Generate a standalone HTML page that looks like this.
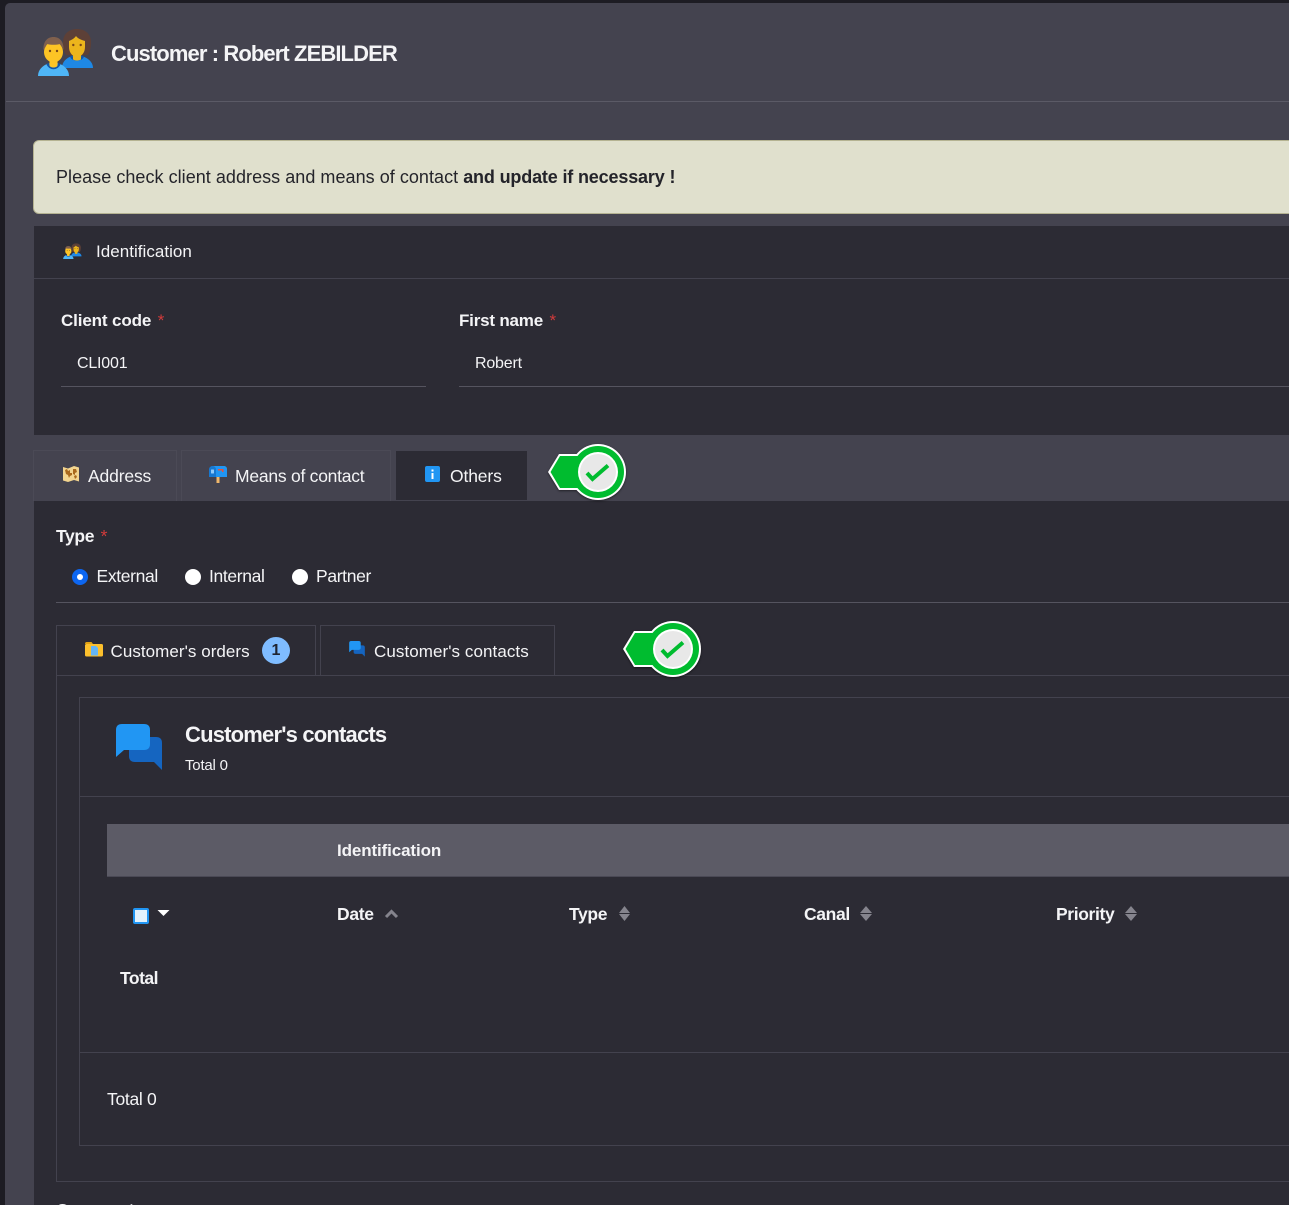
<!DOCTYPE html>
<html>
<head>
<meta charset="utf-8">
<style>
html,body{margin:0;padding:0;width:1289px;height:1205px;overflow:hidden;background:#1d1c23;font-family:"Liberation Sans",sans-serif;color:#f4f4f6}
#w{position:absolute;left:0;top:0;width:1289px;height:1205px;overflow:hidden;background:#1d1c23}
.a{position:absolute}
.t{position:absolute;white-space:nowrap;line-height:20px}
.b{font-weight:bold}
.line{position:absolute;background:#43424e;height:1px}
.tab{position:absolute;box-sizing:border-box;border:1px solid #4a4955}
.req{color:#d23b3b;font-weight:normal}
svg{position:absolute;overflow:visible}
.radio{position:absolute;width:16px;height:16px;border-radius:50%;background:#fff}
</style>
</head>
<body>
<div id="w">
<svg width="0" height="0" style="position:absolute">
<defs>
<symbol id="people" viewBox="0 0 56 48">
<path d="M25 14C25 6 31 1 39 1s14 5 14 13c0 5-1 10-3 13H28c-2-3-3-8-3-13z" fill="#5d4037"/>
<path d="M24 40c0-6 4-10 10-12h10c6 2 11 6 11 12z" fill="#1e88e5"/>
<path d="M33 28c2 4.500 10 4.500 12 0" fill="none" stroke="#1256a8" stroke-width="2.500"/>
<path d="M35 24h8v7c0 1-2 1.500-4 1.500s-4-.5-4-1.500z" fill="#ecb51c"/>
<path d="M31 13c2-1 5-2 7-5 2 3 6 4 9 5v6c0 6-4 10-8 10s-8-4-8-10z" fill="#ecb51c"/>
<circle cx="35.300" cy="17" r="1.200" fill="#784719"/><circle cx="42.700" cy="17" r="1.200" fill="#784719"/>
<path d="M0 48c0-6 4-10 10-12.500h11c6 2.500 10 6.500 10 12.500z" fill="#4fb6f7"/>
<path d="M9.500 35.500c2 6 10 6 12 0" fill="none" stroke="#1256a8" stroke-width="2.500"/>
<path d="M11.500 28h8v9.500c0 1-2 2-4 2s-4-1-4-2z" fill="#fdc425"/>
<ellipse cx="15.500" cy="24" rx="9.500" ry="10.500" fill="#fdc425"/>
<path d="M5.500 22C5 14 9 9 15.500 9s10.500 5 10 13c-1-2-2-4-3.500-6-4 1-9 1-13 0-1 2-2 4-3.500 6z" fill="#80604d"/>
<circle cx="12" cy="23" r="1.200" fill="#784719"/><circle cx="19" cy="23" r="1.200" fill="#784719"/>
</symbol>
<symbol id="chat" viewBox="0 0 46 47">
<path d="M13 13h27q6 0 6 6v27l-8-8H19q-6 0-6-6z" fill="#1565c0"/>
<path d="M6 0h22q6 0 6 6v14q0 6-6 6H8l-8 7V6q0-6 6-6z" fill="#2196f3"/>
</symbol>
<symbol id="pin" viewBox="0 0 78 56">
<path d="M0 28L11 10h30v36H11z" fill="#fff"/>
<circle cx="50" cy="28" r="28" fill="#fff"/>
<path d="M2.500 28L12 12h30v32H12z" fill="#00bc2f"/>
<circle cx="50" cy="28" r="26" fill="#00bc2f"/>
<circle cx="50" cy="28" r="20" fill="#fff"/>
<circle cx="50" cy="28" r="18" fill="#e8e8e8"/>
<path d="M39 29l5.500 6L60 21.500" fill="none" stroke="#00bc2f" stroke-width="4"/>
</symbol>
</defs>
</svg>

<div class="a" style="left:5px;top:3px;width:1290px;height:1210px;background:#44434f;border-radius:5px 0 0 0"></div>
<div class="line" style="left:6px;top:101px;width:1283px;background:#5b5a66"></div>

<svg style="left:38px;top:28px" width="56" height="48"><use href="#people" width="56" height="48"/></svg>
<div class="t b" style="left:111px;top:41px;font-size:22px;line-height:26px;letter-spacing:-.9px">Customer : Robert ZEBILDER</div>

<div class="a" style="left:33px;top:140px;width:1270px;height:74px;box-sizing:border-box;background:#e0e0cd;border:1px solid #b5b392;border-radius:6px"></div>
<div class="t" style="left:56px;top:167px;font-size:18px;color:#24242a;letter-spacing:.04px">Please check client address and means of contact <b style="letter-spacing:-.16px">and update if necessary !</b></div>

<!-- Identification -->
<div class="a" style="left:34px;top:226px;width:1260px;height:209px;background:#2c2b34"></div>
<div class="line" style="left:34px;top:278px;width:1255px"></div>
<svg style="left:63px;top:243px" width="19" height="16"><use href="#people" width="19" height="16"/></svg>
<div class="t" style="left:96px;top:242px;font-size:17px;letter-spacing:.03px">Identification</div>

<div class="t b" style="left:61px;top:311px;font-size:17px;letter-spacing:-.13px">Client code <span class="req" style="margin-left:2px">*</span></div>
<div class="t" style="left:77px;top:354px;font-size:16px;letter-spacing:-.2px">CLI001</div>
<div class="line" style="left:61px;top:386px;width:365px;background:#55545f"></div>

<div class="t b" style="left:459px;top:311px;font-size:17px;letter-spacing:-.2px">First name <span class="req" style="margin-left:2px">*</span></div>
<div class="t" style="left:475px;top:354px;font-size:16px;letter-spacing:-.2px">Robert</div>
<div class="line" style="left:459px;top:386px;width:830px;background:#55545f"></div>

<!-- main tabs -->
<div class="tab" style="left:33px;top:450px;width:144px;height:51px;border-color:#4b4a56;border-bottom:0"></div>
<div class="tab" style="left:181px;top:450px;width:210px;height:51px;border-color:#4b4a56;border-bottom:0"></div>
<div class="tab" style="left:396px;top:451px;width:131px;height:49px;background:#2c2b34;border:0"></div>

<svg style="left:62px;top:465px" width="18" height="18" viewBox="0 0 18 18">
<path d="M1 2l5 1.500L12 1l5 1.500v14L12 15l-6 2-5-1.500z" fill="#f3d58f"/>
<path d="M3 5l2-1 1 2 2-1 0 3 2 0 0 2-2 1-1 2-1-3-2-1zM11 4l3 0 1 3-2 1 0 2-2-1zM12 11l2-1 1 2-2 2z" fill="#a9691d"/>
</svg>
<div class="t" style="left:88px;top:466px;font-size:17.500px;letter-spacing:-.15px">Address</div>

<svg style="left:209px;top:466px" width="18" height="17" viewBox="0 0 18 17">
<rect x="7.500" y="11" width="3" height="6" fill="#f0b76b"/>
<path d="M4 0h11c1.500 0 3 1 3 3v8H1V3c0-2 1.500-3 3-3z" fill="#2196f3"/>
<path d="M3.500 0C5.500 0 7 1.500 7 3.500V11H0V3.500C0 1.500 1.500 0 3.500 0z" fill="#1878d0"/>
<rect x="2" y="3.500" width="3" height="4" rx=".5" fill="#90caf9"/>
<path d="M9 3h5.500v3H13V4.500H9z" fill="#e5533d"/>
</svg>
<div class="t" style="left:235px;top:466px;font-size:17.500px;letter-spacing:-.24px">Means of contact</div>

<svg style="left:425px;top:466px" width="15" height="16" viewBox="0 0 15 16">
<rect width="15" height="16" rx="2" fill="#2196f3"/>
<rect x="6.500" y="7" width="2" height="6" fill="#fff"/><rect x="6.500" y="3.500" width="2" height="2" fill="#fff"/>
</svg>
<div class="t" style="left:450px;top:466px;font-size:17.500px;letter-spacing:-.14px">Others</div>

<!-- content panel -->
<div class="a" style="left:34px;top:501px;width:1260px;height:710px;background:#2c2b34"></div>

<!-- pin 1 -->
<svg style="left:548px;top:444px;filter:drop-shadow(0 1px 1px rgba(0,0,0,.5))" width="78" height="56"><use href="#pin" width="78" height="56"/></svg>

<!-- Type -->
<div class="t b" style="left:56px;top:526px;font-size:17.500px;letter-spacing:-.37px">Type <span class="req" style="margin-left:2px">*</span></div>
<div class="radio" style="left:72px;top:569px;background:#0d66f0"></div>
<div class="radio" style="left:77px;top:574px;width:6px;height:6px;background:#fff"></div>
<div class="t" style="left:96.500px;top:566px;font-size:17.500px;letter-spacing:-.35px">External</div>
<div class="radio" style="left:185px;top:569px"></div>
<div class="t" style="left:209px;top:566px;font-size:17.500px;letter-spacing:-.35px">Internal</div>
<div class="radio" style="left:292px;top:569px"></div>
<div class="t" style="left:316px;top:566px;font-size:17.500px;letter-spacing:-.35px">Partner</div>
<div class="line" style="left:56px;top:602px;width:1233px;background:#55545f"></div>

<!-- sub tabs -->
<div class="tab" style="left:56px;top:625px;width:260px;height:51px;border-color:#43424e"></div>
<div class="tab" style="left:320px;top:625px;width:235px;height:51px;border-color:#43424e"></div>
<div class="a" style="left:56px;top:675px;width:1240px;height:507px;box-sizing:border-box;border:1px solid #43424e"></div>

<svg style="left:85px;top:642px" width="18" height="15" viewBox="0 0 18 15">
<path d="M0 2c0-1 .5-2 1.500-2h5L8 2z" fill="#e2a212"/>
<rect y="2" width="18" height="12.500" rx="1.500" fill="#fcc02d"/>
<path d="M6 4h5l2 2v7.500H6z" fill="#64b5f6"/>
</svg>
<div class="t" style="left:110.500px;top:642px;font-size:17px;letter-spacing:.05px">Customer's orders</div>
<div class="a" style="left:262px;top:637px;width:28px;height:27px;border-radius:50%;background:#7fbcff"></div>
<div class="t b" style="left:262px;top:641px;width:28px;text-align:center;font-size:16px;color:#1f2430">1</div>

<svg style="left:349px;top:641px" width="16" height="16"><use href="#chat" width="16" height="16"/></svg>
<div class="t" style="left:374px;top:642px;font-size:17px;letter-spacing:.07px">Customer's contacts</div>

<!-- pin 2 -->
<svg style="left:623px;top:621px;filter:drop-shadow(0 1px 1px rgba(0,0,0,.5))" width="78" height="56"><use href="#pin" width="78" height="56"/></svg>

<!-- inner card -->
<div class="a" style="left:79px;top:697px;width:1240px;height:449px;box-sizing:border-box;border:1px solid #43424e"></div>
<svg style="left:116px;top:724px" width="46" height="47"><use href="#chat" width="46" height="47"/></svg>
<div class="t b" style="left:185px;top:722px;font-size:22px;line-height:26px;letter-spacing:-.81px">Customer's contacts</div>
<div class="t" style="left:185px;top:756px;font-size:15px;letter-spacing:-.2px">Total 0</div>
<div class="line" style="left:80px;top:796px;width:1209px"></div>

<!-- table -->
<div class="a" style="left:107px;top:824px;width:1190px;height:52px;background:#5c5b66;border-bottom:1px solid #4a4955"></div>
<div class="t b" style="left:337px;top:841px;font-size:17px;letter-spacing:-.12px">Identification</div>

<div class="a" style="left:133px;top:908px;width:16px;height:16px;box-sizing:border-box;border:2px solid #2196f3;border-radius:2px;background:#e3f2fd"></div>
<svg style="left:157px;top:909px" width="13" height="8"><path d="M0.500 1h12L6.500 7z" fill="#fff"/></svg>

<div class="t b" style="left:337px;top:904px;font-size:17.500px;letter-spacing:-.3px">Date</div>
<svg style="left:385px;top:909px" width="13" height="9"><path d="M1 8l5.500-5.500L12 8" fill="none" stroke="#85848d" stroke-width="3"/></svg>

<div class="t b" style="left:569px;top:904px;font-size:17.500px;letter-spacing:-.35px">Type</div>
<svg style="left:619px;top:906px" width="11" height="15"><path d="M5.500 0L11 7H0zM5.500 15L0 8h11z" fill="#85848d"/></svg>

<div class="t b" style="left:804px;top:904px;font-size:17.500px;letter-spacing:-.35px">Canal</div>
<svg style="left:860px;top:906px" width="12" height="15"><path d="M6 0L12 7H0zM6 15L0 8h12z" fill="#85848d"/></svg>

<div class="t b" style="left:1056px;top:904px;font-size:17.500px;letter-spacing:-.37px">Priority</div>
<svg style="left:1125px;top:906px" width="12" height="15"><path d="M6 0L12 7H0zM6 15L0 8h12z" fill="#85848d"/></svg>

<div class="t b" style="left:120px;top:968px;font-size:17.500px;letter-spacing:-.5px">Total</div>
<div class="line" style="left:80px;top:1052px;width:1209px"></div>
<div class="t" style="left:107px;top:1089px;font-size:17.500px;letter-spacing:-.3px">Total 0</div>

<div class="t b" style="left:56px;top:1200px;font-size:17.500px;letter-spacing:-.4px">Comments</div>
</div>
</body>
</html>
